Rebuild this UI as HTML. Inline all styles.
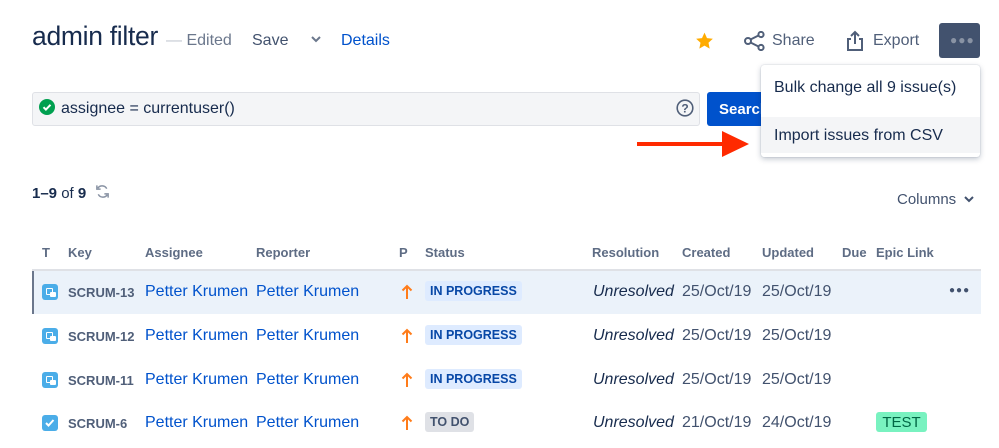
<!DOCTYPE html>
<html><head><meta charset="utf-8"><style>
*{margin:0;padding:0;box-sizing:border-box}
body{width:999px;height:448px;background:#fff;font-family:"Liberation Sans",Arial,sans-serif;position:relative;overflow:hidden;color:#172b4d}
.a{position:absolute;white-space:nowrap}
.h{font-size:13px;font-weight:bold;color:#5e6c84;top:245px}
.key{font-size:13px;font-weight:bold;color:#505f79;left:68px}
.nm{font-size:16px;color:#0052cc}
.loz{font-size:12.5px;font-weight:bold;color:#0747a6;background:#deebff;border-radius:3px;padding:3px 5px;left:425px}
.un{font-size:16px;font-style:italic;color:#172b4d;left:593px}
.dt{font-size:16px;color:#42526e}
.ic{position:absolute;left:42px;width:16px;height:16px;border-radius:3px;background:#4bade8}
</style></head><body>
<div class="a" style="left:32px;top:21px;font-size:26.5px;color:#172b4d;letter-spacing:-0.3px">admin filter</div>
<div class="a" style="left:166px;top:32px;font-size:16px;color:#6b778c"><span style="color:#c1c7d0">—</span> Edited</div>
<div class="a" style="left:252px;top:32px;font-size:16px;color:#42526e">Save</div>
<svg class="a" style="left:311px;top:35px" width="10" height="8"><path d="M1 2l4 4 4-4" stroke="#6b778c" stroke-width="2" fill="none"/></svg>
<div class="a" style="left:341px;top:32px;font-size:16px;color:#0052cc">Details</div>
<svg class="a" style="left:694px;top:31px" width="21" height="20" viewBox="0 0 24 24"><path d="M12 2l3 6.5 7 .8-5.2 4.8 1.4 7L12 17.6 5.8 21.1l1.4-7L2 9.3l7-.8z" fill="#ffab00"/></svg>
<svg class="a" style="left:744px;top:31px" width="22" height="20" viewBox="0 0 22 20"><circle cx="4" cy="10" r="3" stroke="#505f79" stroke-width="2" fill="none"/><circle cx="17" cy="3.5" r="2.6" stroke="#505f79" stroke-width="2" fill="none"/><circle cx="17" cy="16.5" r="2.6" stroke="#505f79" stroke-width="2" fill="none"/><path d="M6.5 8.5l8-4M6.5 11.5l8 4" stroke="#505f79" stroke-width="2"/></svg>
<div class="a" style="left:772px;top:32px;font-size:16px;color:#505f79">Share</div>
<svg class="a" style="left:846px;top:30px" width="18" height="22" viewBox="0 0 18 22"><path d="M9 14V2M5 6l4-4 4 4M5 9H2v11h14V9h-3" stroke="#505f79" stroke-width="2" fill="none"/></svg>
<div class="a" style="left:873px;top:32px;font-size:16px;color:#505f79">Export</div>
<div class="a" style="left:939px;top:23px;width:41px;height:35px;background:#42526e;border-radius:3px"></div>
<div class="a" style="left:950px;top:33px;font-size:12px;color:#8993a4;letter-spacing:1px">●●●</div>

<div class="a" style="left:32px;top:92px;width:668px;height:34px;background:#f4f5f7;border:1px solid #dfe1e6;border-radius:3px"></div>
<svg class="a" style="left:39px;top:99px" width="16" height="16"><circle cx="8" cy="8" r="8" fill="#00a050"/><path d="M4.5 8.2l2.4 2.4 4.6-4.8" stroke="#fff" stroke-width="2" fill="none"/></svg>
<div class="a" style="left:61px;top:100px;font-size:16px;color:#172b4d">assignee = currentuser()</div>
<svg class="a" style="left:676px;top:99px" width="18" height="18"><circle cx="9" cy="9" r="7.8" stroke="#505f79" stroke-width="1.6" fill="none"/><text x="9" y="13.5" font-size="12" font-weight="bold" text-anchor="middle" fill="#505f79" font-family="Liberation Sans">?</text></svg>
<div class="a" style="left:707px;top:92px;width:70px;height:34px;background:#0052cc;border-radius:3px;color:#fff;font-weight:bold;font-size:15px;padding:9px 0 0 12px">Search</div>

<div class="a" style="left:761px;top:65px;width:219px;height:92px;background:#fff;border-radius:3px;box-shadow:0 2px 6px rgba(9,30,66,.25),0 0 1px rgba(9,30,66,.3)"></div>
<div class="a" style="left:774px;top:79px;font-size:16px;color:#172b4d">Bulk change all 9 issue(s)</div>
<div class="a" style="left:761px;top:117px;width:219px;height:36px;background:#f4f5f7"></div>
<div class="a" style="left:774px;top:127px;font-size:16px;color:#172b4d">Import issues from CSV</div>
<svg class="a" style="left:636px;top:130px" width="114" height="28"><path d="M1 14H95" stroke="#ff2a00" stroke-width="4"/><path d="M86 1L113 14 86 27z" fill="#ff2a00"/></svg>

<div class="a" style="left:32px;top:185px;font-size:15px;color:#172b4d"><b>1–9</b> of <b>9</b></div>
<svg class="a" style="left:95px;top:184px" width="15" height="15" viewBox="0 0 16 16"><path d="M12.5 5A5.5 5.5 0 0 0 3 4.5M3.5 11A5.5 5.5 0 0 0 13 11.5" stroke="#8993a4" stroke-width="1.6" fill="none"/><path d="M2 1.5v4h4M14 14.5v-4h-4" stroke="#8993a4" stroke-width="1.6" fill="none"/></svg>
<div class="a" style="left:897px;top:191px;font-size:15px;color:#42526e">Columns</div>
<svg class="a" style="left:964px;top:195px" width="10" height="8"><path d="M1 2l4 4 4-4" stroke="#42526e" stroke-width="2" fill="none"/></svg>

<div class="a h" style="left:42px">T</div>
<div class="a h" style="left:68px">Key</div>
<div class="a h" style="left:145px">Assignee</div>
<div class="a h" style="left:256px">Reporter</div>
<div class="a h" style="left:399px">P</div>
<div class="a h" style="left:425px">Status</div>
<div class="a h" style="left:592px">Resolution</div>
<div class="a h" style="left:682px">Created</div>
<div class="a h" style="left:762px">Updated</div>
<div class="a h" style="left:842px">Due</div>
<div class="a h" style="left:876px">Epic Link</div>
<div class="a" style="left:32px;top:269px;width:949px;height:2px;background:#dfe1e6"></div>
<div class="a" style="left:32px;top:271px;width:949px;height:43px;background:#ebf2fa;border-left:2px solid #6b778c"></div>
<div class="a" style="left:949px;top:285px;font-size:10px;color:#42526e;letter-spacing:1px">●●●</div>

<div class="ic" style="top:284px"></div><div class="a" style="left:46px;top:288px;width:7px;height:7px;border:1.5px solid #fff;border-radius:1px"></div><div class="a" style="left:50px;top:292px;width:6px;height:5px;background:#fff;border-radius:1px"></div>
<div class="ic" style="top:328px"></div><div class="a" style="left:46px;top:332px;width:7px;height:7px;border:1.5px solid #fff;border-radius:1px"></div><div class="a" style="left:50px;top:336px;width:6px;height:5px;background:#fff;border-radius:1px"></div>
<div class="ic" style="top:372px"></div><div class="a" style="left:46px;top:376px;width:7px;height:7px;border:1.5px solid #fff;border-radius:1px"></div><div class="a" style="left:50px;top:380px;width:6px;height:5px;background:#fff;border-radius:1px"></div>
<div class="ic" style="top:415px"></div><svg class="a" style="left:42px;top:415px" width="16" height="16"><path d="M4 8l2.5 2.5 5-5.5" stroke="#fff" stroke-width="2" fill="none"/></svg>

<div class="a key" style="top:285px">SCRUM-13</div>
<div class="a key" style="top:329px">SCRUM-12</div>
<div class="a key" style="top:373px">SCRUM-11</div>
<div class="a key" style="top:416px">SCRUM-6</div>

<div class="a nm" style="left:145px;top:283px">Petter Krumen</div><div class="a nm" style="left:256px;top:283px">Petter Krumen</div>
<div class="a nm" style="left:145px;top:327px">Petter Krumen</div><div class="a nm" style="left:256px;top:327px">Petter Krumen</div>
<div class="a nm" style="left:145px;top:371px">Petter Krumen</div><div class="a nm" style="left:256px;top:371px">Petter Krumen</div>
<div class="a nm" style="left:145px;top:414px">Petter Krumen</div><div class="a nm" style="left:256px;top:414px">Petter Krumen</div>

<svg class="a" style="left:401px;top:284px" width="12" height="16"><path d="M6 15V2M1.5 6.5L6 2l4.5 4.5" stroke="#ff7c1a" stroke-width="2" fill="none"/></svg>
<svg class="a" style="left:401px;top:328px" width="12" height="16"><path d="M6 15V2M1.5 6.5L6 2l4.5 4.5" stroke="#ff7c1a" stroke-width="2" fill="none"/></svg>
<svg class="a" style="left:401px;top:372px" width="12" height="16"><path d="M6 15V2M1.5 6.5L6 2l4.5 4.5" stroke="#ff7c1a" stroke-width="2" fill="none"/></svg>
<svg class="a" style="left:401px;top:415px" width="12" height="16"><path d="M6 15V2M1.5 6.5L6 2l4.5 4.5" stroke="#ff7c1a" stroke-width="2" fill="none"/></svg>

<div class="a loz" style="top:281px">IN PROGRESS</div>
<div class="a loz" style="top:325px">IN PROGRESS</div>
<div class="a loz" style="top:369px">IN PROGRESS</div>
<div class="a loz" style="top:412px;background:#dfe1e6;color:#42526e">TO DO</div>

<div class="a un" style="top:283px">Unresolved</div><div class="a dt" style="left:682px;top:283px">25/Oct/19</div><div class="a dt" style="left:762px;top:283px">25/Oct/19</div>
<div class="a un" style="top:327px">Unresolved</div><div class="a dt" style="left:682px;top:327px">25/Oct/19</div><div class="a dt" style="left:762px;top:327px">25/Oct/19</div>
<div class="a un" style="top:371px">Unresolved</div><div class="a dt" style="left:682px;top:371px">25/Oct/19</div><div class="a dt" style="left:762px;top:371px">25/Oct/19</div>
<div class="a un" style="top:414px">Unresolved</div><div class="a dt" style="left:682px;top:414px">21/Oct/19</div><div class="a dt" style="left:762px;top:414px">24/Oct/19</div>
<div class="a" style="left:876px;top:412px;width:51px;height:20px;background:#79f2c0;border-radius:3px;font-size:15px;color:#006644;text-align:center;padding-top:2px">TEST</div>
</body></html>
